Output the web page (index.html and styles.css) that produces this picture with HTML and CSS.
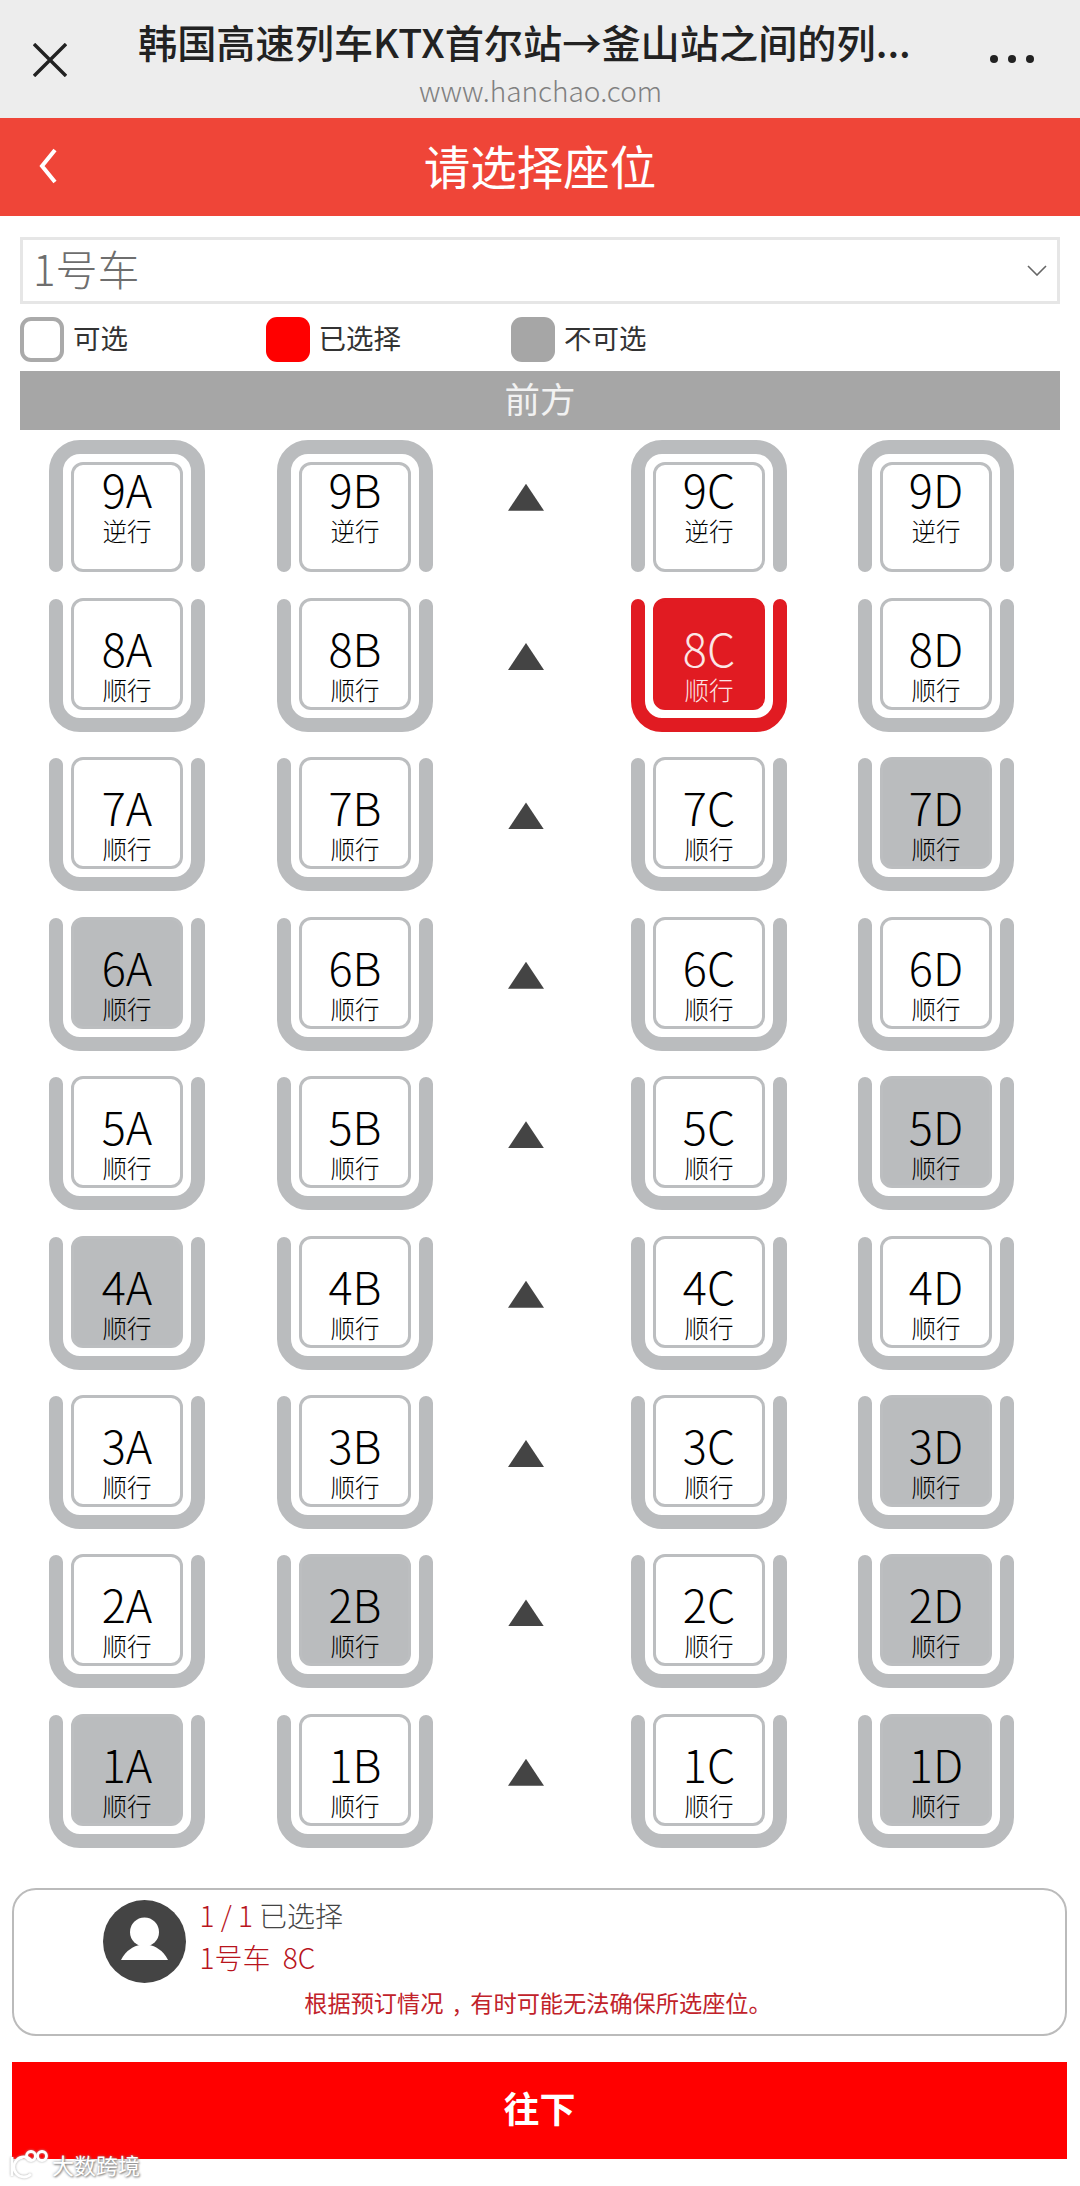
FILE: index.html
```html
<!DOCTYPE html>
<html lang="zh">
<head>
<meta charset="utf-8">
<title>请选择座位</title>
<link rel="stylesheet" href="styles.css">
</head>
<body>
<svg class="defs" width="0" height="0" aria-hidden="true">
  <symbol id="rail-down" viewBox="0 0 156 134"><path d="M7 8V103A24 24 0 0 0 31 127H125A24 24 0 0 0 149 103V8" fill="none" stroke="currentColor" stroke-width="14" stroke-linecap="round"/></symbol>
  <symbol id="rail-up" viewBox="0 0 156 134"><path d="M7 126V32A24 24 0 0 1 31 8H125A24 24 0 0 1 149 32V126" fill="none" stroke="currentColor" stroke-width="14" stroke-linecap="round"/></symbol>
</svg>
<div class="page">
  <header class="topbar">
    <svg class="close" width="34" height="34" viewBox="0 0 34 34"><path d="M1 1L33 33M33 1L1 33" fill="none" stroke="#222" stroke-width="3.4"/></svg>
    <div class="topbar-text">
      <div class="topbar-title">韩国高速列车KTX首尔站→釜山站之间的列...</div>
      <div class="topbar-url">www.hanchao.com</div>
    </div>
    <div class="dots"><i></i><i></i><i></i></div>
  </header>
  <div class="titlebar">
    <svg class="back" width="20" height="36" viewBox="0 0 20 36"><path d="M17 2L4 18L17 34" fill="none" stroke="#fff" stroke-width="4"/></svg>
    <h1 class="titlebar-text">请选择座位</h1>
  </div>
  <div class="select">
    <span class="select-value">1号车</span>
    <svg width="20" height="11" viewBox="0 0 20 11"><path d="M1 1L10 10L19 1" fill="none" stroke="#666" stroke-width="1.6"/></svg>
  </div>
  <div class="legend">
    <div class="legend-item"><span class="swatch swatch-free"></span><span class="legend-label">可选</span></div>
    <div class="legend-item"><span class="swatch swatch-on"></span><span class="legend-label">已选择</span></div>
    <div class="legend-item"><span class="swatch swatch-off"></span><span class="legend-label">不可选</span></div>
  </div>
  <div class="front">前方</div>
  <div class="seats">
    <div class="seat seat-up"><svg class="rail"><use href="#rail-up"/></svg><div class="pod"><span class="no">9A</span><span class="dir">逆行</span></div></div>
    <div class="seat seat-up"><svg class="rail"><use href="#rail-up"/></svg><div class="pod"><span class="no">9B</span><span class="dir">逆行</span></div></div>
    <div class="aisle"><i class="tri"></i></div>
    <div class="seat seat-up"><svg class="rail"><use href="#rail-up"/></svg><div class="pod"><span class="no">9C</span><span class="dir">逆行</span></div></div>
    <div class="seat seat-up"><svg class="rail"><use href="#rail-up"/></svg><div class="pod"><span class="no">9D</span><span class="dir">逆行</span></div></div>

    <div class="seat"><svg class="rail"><use href="#rail-down"/></svg><div class="pod"><span class="no">8A</span><span class="dir">顺行</span></div></div>
    <div class="seat"><svg class="rail"><use href="#rail-down"/></svg><div class="pod"><span class="no">8B</span><span class="dir">顺行</span></div></div>
    <div class="aisle"><i class="tri"></i></div>
    <div class="seat seat-on"><svg class="rail"><use href="#rail-down"/></svg><div class="pod"><span class="no">8C</span><span class="dir">顺行</span></div></div>
    <div class="seat"><svg class="rail"><use href="#rail-down"/></svg><div class="pod"><span class="no">8D</span><span class="dir">顺行</span></div></div>

    <div class="seat"><svg class="rail"><use href="#rail-down"/></svg><div class="pod"><span class="no">7A</span><span class="dir">顺行</span></div></div>
    <div class="seat"><svg class="rail"><use href="#rail-down"/></svg><div class="pod"><span class="no">7B</span><span class="dir">顺行</span></div></div>
    <div class="aisle"><i class="tri"></i></div>
    <div class="seat"><svg class="rail"><use href="#rail-down"/></svg><div class="pod"><span class="no">7C</span><span class="dir">顺行</span></div></div>
    <div class="seat seat-off"><svg class="rail"><use href="#rail-down"/></svg><div class="pod"><span class="no">7D</span><span class="dir">顺行</span></div></div>

    <div class="seat seat-off"><svg class="rail"><use href="#rail-down"/></svg><div class="pod"><span class="no">6A</span><span class="dir">顺行</span></div></div>
    <div class="seat"><svg class="rail"><use href="#rail-down"/></svg><div class="pod"><span class="no">6B</span><span class="dir">顺行</span></div></div>
    <div class="aisle"><i class="tri"></i></div>
    <div class="seat"><svg class="rail"><use href="#rail-down"/></svg><div class="pod"><span class="no">6C</span><span class="dir">顺行</span></div></div>
    <div class="seat"><svg class="rail"><use href="#rail-down"/></svg><div class="pod"><span class="no">6D</span><span class="dir">顺行</span></div></div>

    <div class="seat"><svg class="rail"><use href="#rail-down"/></svg><div class="pod"><span class="no">5A</span><span class="dir">顺行</span></div></div>
    <div class="seat"><svg class="rail"><use href="#rail-down"/></svg><div class="pod"><span class="no">5B</span><span class="dir">顺行</span></div></div>
    <div class="aisle"><i class="tri"></i></div>
    <div class="seat"><svg class="rail"><use href="#rail-down"/></svg><div class="pod"><span class="no">5C</span><span class="dir">顺行</span></div></div>
    <div class="seat seat-off"><svg class="rail"><use href="#rail-down"/></svg><div class="pod"><span class="no">5D</span><span class="dir">顺行</span></div></div>

    <div class="seat seat-off"><svg class="rail"><use href="#rail-down"/></svg><div class="pod"><span class="no">4A</span><span class="dir">顺行</span></div></div>
    <div class="seat"><svg class="rail"><use href="#rail-down"/></svg><div class="pod"><span class="no">4B</span><span class="dir">顺行</span></div></div>
    <div class="aisle"><i class="tri"></i></div>
    <div class="seat"><svg class="rail"><use href="#rail-down"/></svg><div class="pod"><span class="no">4C</span><span class="dir">顺行</span></div></div>
    <div class="seat"><svg class="rail"><use href="#rail-down"/></svg><div class="pod"><span class="no">4D</span><span class="dir">顺行</span></div></div>

    <div class="seat"><svg class="rail"><use href="#rail-down"/></svg><div class="pod"><span class="no">3A</span><span class="dir">顺行</span></div></div>
    <div class="seat"><svg class="rail"><use href="#rail-down"/></svg><div class="pod"><span class="no">3B</span><span class="dir">顺行</span></div></div>
    <div class="aisle"><i class="tri"></i></div>
    <div class="seat"><svg class="rail"><use href="#rail-down"/></svg><div class="pod"><span class="no">3C</span><span class="dir">顺行</span></div></div>
    <div class="seat seat-off"><svg class="rail"><use href="#rail-down"/></svg><div class="pod"><span class="no">3D</span><span class="dir">顺行</span></div></div>

    <div class="seat"><svg class="rail"><use href="#rail-down"/></svg><div class="pod"><span class="no">2A</span><span class="dir">顺行</span></div></div>
    <div class="seat seat-off"><svg class="rail"><use href="#rail-down"/></svg><div class="pod"><span class="no">2B</span><span class="dir">顺行</span></div></div>
    <div class="aisle"><i class="tri"></i></div>
    <div class="seat"><svg class="rail"><use href="#rail-down"/></svg><div class="pod"><span class="no">2C</span><span class="dir">顺行</span></div></div>
    <div class="seat seat-off"><svg class="rail"><use href="#rail-down"/></svg><div class="pod"><span class="no">2D</span><span class="dir">顺行</span></div></div>

    <div class="seat seat-off"><svg class="rail"><use href="#rail-down"/></svg><div class="pod"><span class="no">1A</span><span class="dir">顺行</span></div></div>
    <div class="seat"><svg class="rail"><use href="#rail-down"/></svg><div class="pod"><span class="no">1B</span><span class="dir">顺行</span></div></div>
    <div class="aisle"><i class="tri"></i></div>
    <div class="seat"><svg class="rail"><use href="#rail-down"/></svg><div class="pod"><span class="no">1C</span><span class="dir">顺行</span></div></div>
    <div class="seat seat-off"><svg class="rail"><use href="#rail-down"/></svg><div class="pod"><span class="no">1D</span><span class="dir">顺行</span></div></div>
  </div>
  <section class="card">
    <div class="card-main">
      <svg class="avatar" width="83" height="83" viewBox="0 0 83 83">
        <circle cx="41.5" cy="41.5" r="41.5" fill="#444"/>
        <circle cx="41.5" cy="32" r="14.5" fill="#fff"/>
        <path d="M18 60C23 50 31 46 37 45H46C52 46 60 50 65 60Z" fill="#fff"/>
      </svg>
      <div class="card-lines">
        <div class="card-line"><span class="red">1 / 1</span> <span class="grey">已选择</span></div>
        <div class="card-line red">1号车&nbsp; 8C</div>
      </div>
    </div>
    <p class="notice">根据预订情况 , 有时可能无法确保所选座位。</p>
  </section>
  <button class="next" type="button">往下</button>
  <div class="mark">
    <svg width="40" height="30" viewBox="0 0 40 30"><g fill="none" stroke="#fff" stroke-width="2.8"><path d="M3 8V27"/><path d="M22 11A10 10 0 1 0 22 25"/><circle cx="22" cy="7" r="4.5"/><circle cx="33" cy="7" r="4.5"/></g></svg>
    <span>大数跨境</span>
  </div>
</div>
</body>
</html>
```
FILE: styles.css
```css
* { box-sizing: border-box; }
html, body { margin: 0; padding: 0; background: #fff; }
body { font-family: "Noto Sans CJK SC", "Noto Sans", sans-serif; }
.defs { position: absolute; }
.page { position: relative; width: 1080px; height: 2186px; overflow: hidden; }

.topbar { position: relative; height: 118px; background: #ededed; display: flex; align-items: flex-start; padding: 43px 46px 0 33px; }
.close { flex: none; }
.topbar-text { flex: 1; margin-top: -27px; display: flex; flex-direction: column; align-items: flex-start; padding-left: 71px; }
.topbar-title { font-size: 39.2px; line-height: 50px; font-weight: 500; color: #222; white-space: nowrap; }
.topbar-url { font-size: 28px; line-height: 32px; margin: 8px 0 0 281px; color: #808080; font-weight: 300; }
.dots { flex: none; display: flex; gap: 10px; margin-top: 12px; }
.dots i { width: 8px; height: 8px; border-radius: 50%; background: #222; }

.titlebar { height: 98px; background: #ef4538; display: flex; align-items: center; justify-content: center; position: relative; padding-bottom: 5px; }
.back { position: absolute; left: 38px; top: 30px; }
.titlebar-text { margin: 0; font-size: 46.5px; line-height: 60px; font-weight: 400; color: #fff; }

.select { margin: 21px 20px 0 20px; height: 67px; border: 3px solid #e6e6e6; display: flex; align-items: center; justify-content: space-between; padding: 0 10px 6px 10px; }
.select-value { font-size: 42px; line-height: 50px; color: #6e6e6e; font-weight: 300; }
.select svg { margin-top: 6px; }

.legend { display: flex; margin: 13px 0 0 20px; height: 45px; }
.legend-item { width: 245.5px; display: flex; align-items: center; gap: 9px; font-size: 27.5px; line-height: 41px; color: #333; }
.legend-label { margin-bottom: 4px; }
.swatch { width: 44px; height: 45px; border-radius: 11px; }
.swatch-free { border: 4px solid #aaa; }
.swatch-on { background: #f00; }
.swatch-off { background: #a6a6a6; }

.front { margin: 9px 20px 0 20px; height: 59px; background: #a6a6a6; color: #f2f2f2; font-size: 35.5px; line-height: 54px; text-align: center; }

.seats { display: grid; grid-template-columns: 228px 231px 123px 227px 156px; grid-auto-rows: 134px; row-gap: 25.4px; padding: 8.7px 0 0 49px; }
.seat { position: relative; width: 156px; height: 134px; color: #babcbe; }
.rail { position: absolute; left: 0; top: 0; width: 156px; height: 134px; }
.pod { position: relative; width: 112px; height: 112px; margin-left: 22px; border: 3px solid #bcbec0; border-radius: 12px; background: #fff; display: flex; flex-direction: column; align-items: center; padding-top: 25px; }
.no { font-size: 45px; line-height: 44px; color: #000; font-weight: 300; }
.dir { font-size: 24.5px; line-height: 24px; margin-top: 8px; color: #000; white-space: nowrap; font-weight: 300; }
.seat-up { padding-top: 23px; }
.seat-up .pod { height: 110px; padding-top: 2px; }
.seat-off .pod { background: #babcbe; }
.seat-on { color: #e11b22; }
.seat-on .pod { background: #e11b22; border-color: #e11b22; }
.seat-on .no, .seat-on .dir { color: #fbe6e6; }
.aisle { padding-top: 45px; }
.tri { display: block; width: 36px; height: 27px; background: #444; clip-path: polygon(50% 0, 100% 100%, 0 100%); }

.card { margin: 40px 13px 0 12px; height: 148px; border: 2.5px solid #bbb; border-radius: 24px; padding: 10.5px 0 0 88.5px; }
.card-main { display: flex; gap: 14px; height: 83px; }
.avatar { flex: none; }
.card-lines { margin-top: -6px; }
.card-line { font-size: 28px; line-height: 42px; white-space: nowrap; font-weight: 300; }
.red { color: #b8141c; }
.grey { color: #444; }
.notice { margin: 5px 0 0 -88.5px; padding-right: 3px; text-align: center; font-size: 23.2px; line-height: 28px; color: #c1222a; white-space: nowrap; word-spacing: 5px; }

.next { display: flex; align-items: center; justify-content: center; width: 1055px; height: 97px; margin: 26px 0 0 12px; border: 0; padding: 0 0 6px; background: #f00; color: #fff; font-family: inherit; font-size: 36px; font-weight: 700; }

.mark { position: absolute; left: 9px; top: 2149px; display: flex; align-items: center; gap: 3px; color: #fff; font-size: 22px; line-height: 28px; text-shadow: 0 0 3px #888, 1px 1px 2px #888; }
.mark svg { filter: drop-shadow(0 0 1px #aaa); }
```
